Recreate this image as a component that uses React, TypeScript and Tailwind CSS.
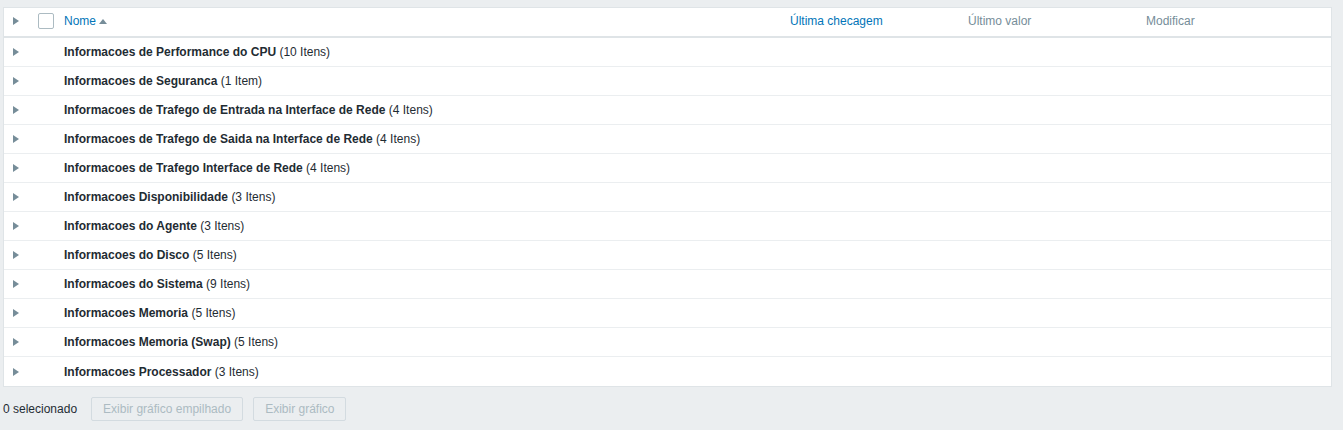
import React from "react";

const rows: [string, string][] = [
  ["Informacoes de Performance do CPU", "(10 Itens)"],
  ["Informacoes de Seguranca", "(1 Item)"],
  ["Informacoes de Trafego de Entrada na Interface de Rede", "(4 Itens)"],
  ["Informacoes de Trafego de Saida na Interface de Rede", "(4 Itens)"],
  ["Informacoes de Trafego Interface de Rede", "(4 Itens)"],
  ["Informacoes Disponibilidade", "(3 Itens)"],
  ["Informacoes do Agente", "(3 Itens)"],
  ["Informacoes do Disco", "(5 Itens)"],
  ["Informacoes do Sistema", "(9 Itens)"],
  ["Informacoes Memoria", "(5 Itens)"],
  ["Informacoes Memoria (Swap)", "(5 Itens)"],
  ["Informacoes Processador", "(3 Itens)"],
];

function Arrow() {
  return (
    <svg width="6" height="8" viewBox="0 0 6 8" className="block">
      <path d="M0 0 L6 4 L0 8 Z" fill="#768d99" />
    </svg>
  );
}

export default function App() {
  return (
    <div
      className="w-[1343px] h-[430px] bg-[#ebeef0] text-[12px] text-[#1f2c33] overflow-hidden"
      style={{ fontFamily: '"Liberation Sans", Arial, sans-serif' }}
    >
      <div className="pt-[7px] pl-[3px] w-[1332px]">
        <div className="bg-white border border-[#dfe4e7]">
          <div className="flex items-center h-[30px] pb-[2px] border-b-2 border-[#dfe4e7]">
            <div className="w-[34px] flex justify-start pl-[9px]">
              <Arrow />
            </div>
            <div className="w-[26px] flex items-center">
              <div className="w-[16px] h-[16px] border border-[#acbbc2] rounded-[2px] bg-white" />
            </div>
            <div className="flex items-center gap-[3px] w-[726px] text-[#0275b8]">
              <span>Nome</span>
              <svg width="8" height="5" viewBox="0 0 8 5" className="mt-[1px]">
                <path d="M0 5 L4 0 L8 5 Z" fill="#768d99" />
              </svg>
            </div>
            <div className="w-[178px] text-[#0275b8]">Última checagem</div>
            <div className="w-[178px] text-[#768d99]">Último valor</div>
            <div className="text-[#768d99]">Modificar</div>
          </div>
          {rows.map(([name, count], i) => (
            <div
              key={i}
              className={`flex items-center h-[29px] ${i < rows.length - 1 ? "border-b border-[#ebeef0]" : ""}`}
            >
              <div className="w-[60px] pl-[9px]">
                <Arrow />
              </div>
              <div className="whitespace-nowrap">
                <span className="font-bold">{name}</span> <span>{count}</span>
              </div>
            </div>
          ))}
        </div>
      </div>
      <div className="flex items-center pt-[10px] pl-[3px]">
        <span className="mr-[14px]">0 selecionado</span>
        <div className="h-[24px] px-[11px] flex items-center border border-[#d3dbe0] rounded-[2px] text-[#acbbc2] mr-[10px]">
          Exibir gráfico empilhado
        </div>
        <div className="h-[24px] px-[11px] flex items-center border border-[#d3dbe0] rounded-[2px] text-[#acbbc2]">
          Exibir gráfico
        </div>
      </div>
    </div>
  );
}
